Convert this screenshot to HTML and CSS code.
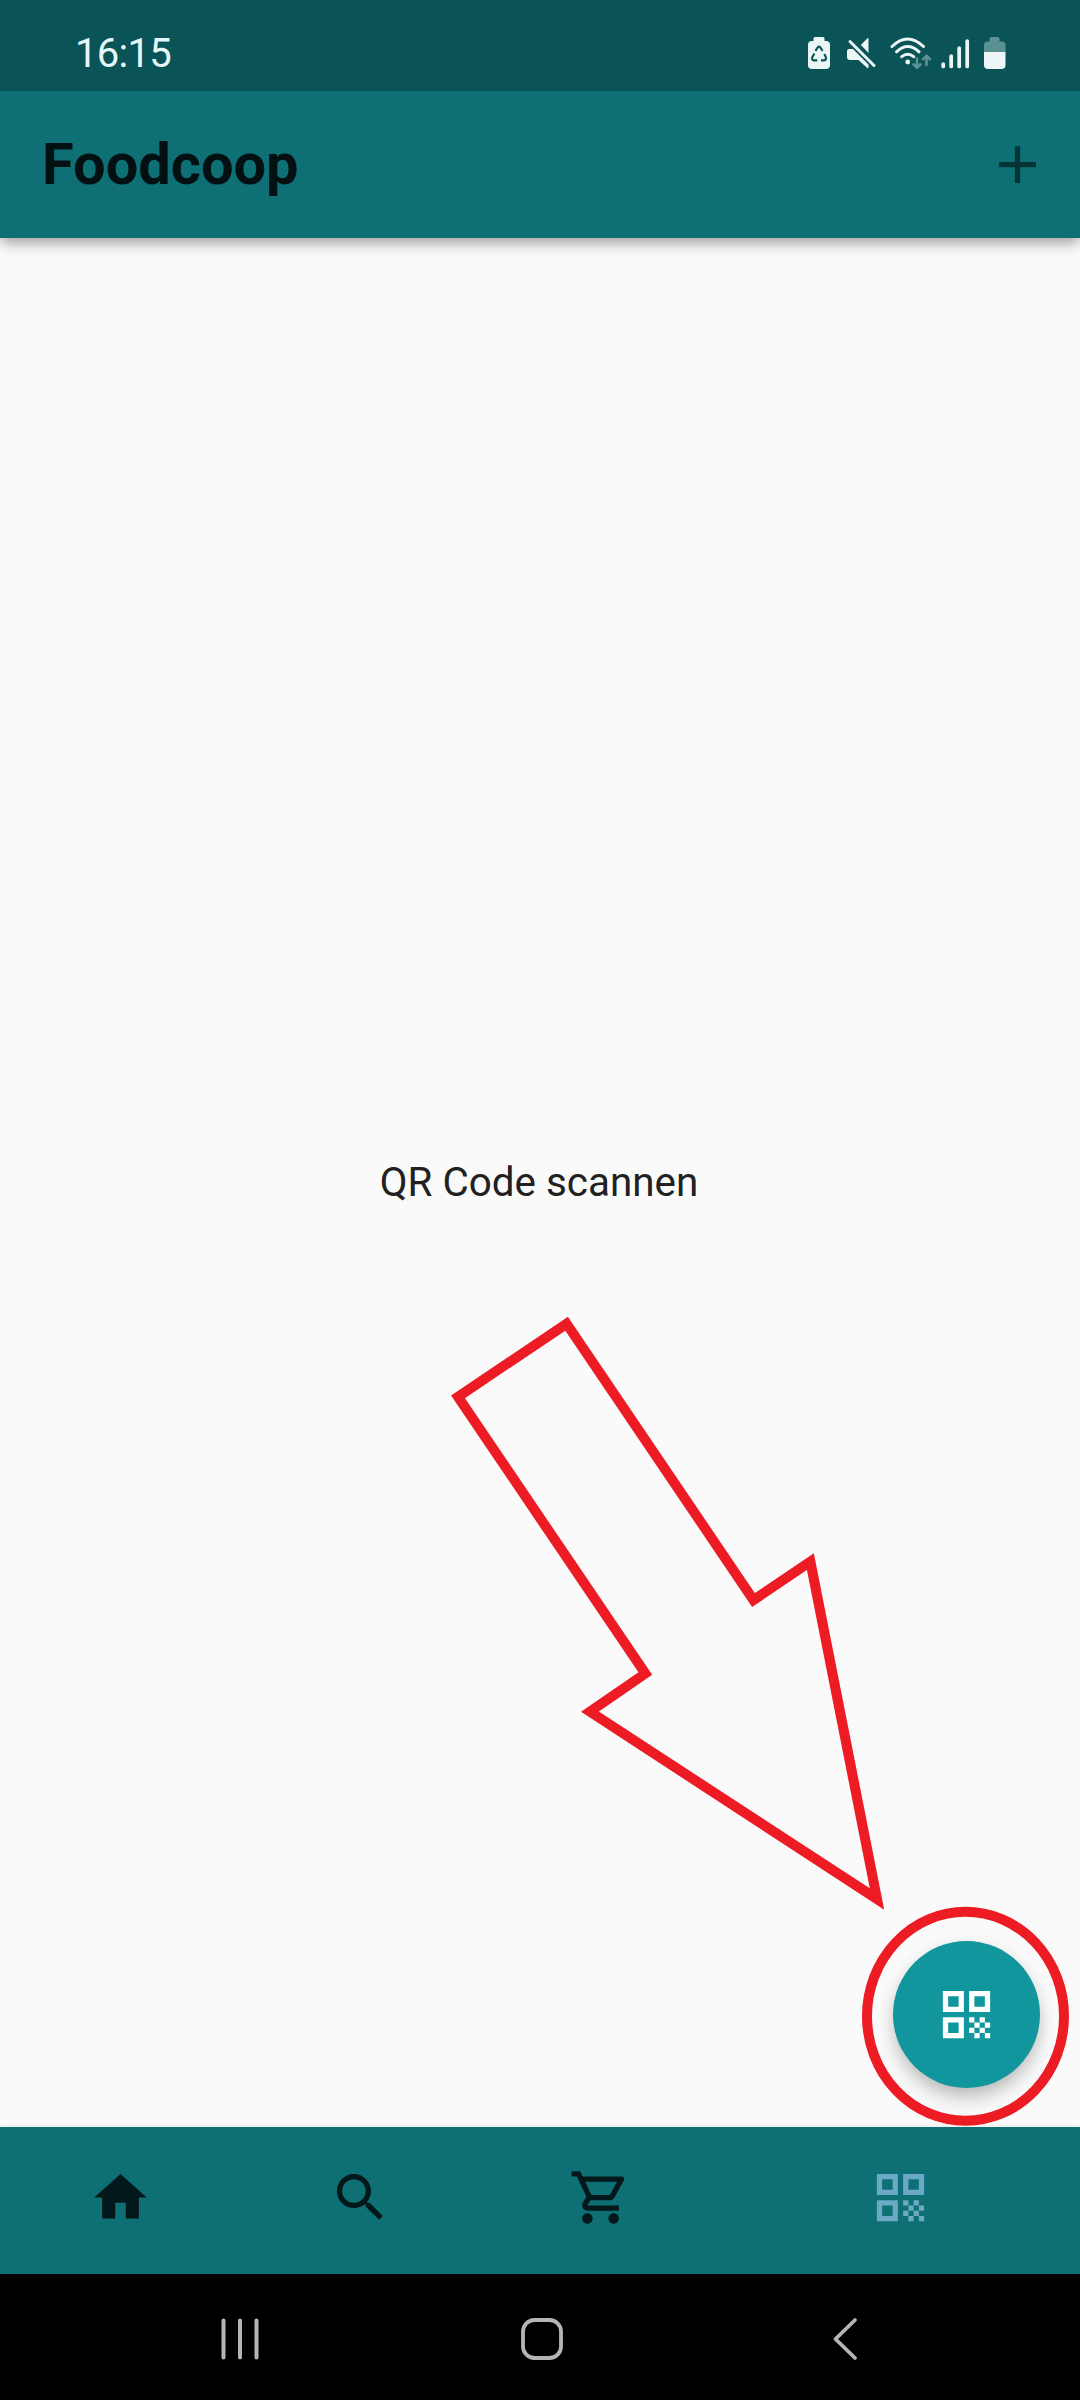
FILE: index.html
```html
<!DOCTYPE html>
<html lang="de">
<head>
<meta charset="utf-8">
<title>Foodcoop</title>
<link rel="stylesheet" href="styles.css">
</head>
<body>
<svg width="0" height="0" class="defs">
  <symbol id="qr" viewBox="0 0 24 24">
    <path d="M3 11h8V3H3v8zm2-6h4v4H5V5zM3 21h8v-8H3v8zm2-6h4v4H5v-4zM13 3v8h8V3h-8zm6 6h-4V5h4v4zM19 19h2v2h-2zM13 13h2v2h-2zM15 15h2v2h-2zM13 17h2v2h-2zM15 19h2v2h-2zM17 17h2v2h-2zM17 13h2v2h-2zM19 15h2v2h-2z"/>
  </symbol>
</svg>
<div class="screen">
  <header class="status">
    <span class="time">16:15</span>
    <div class="status-icons">
      <svg class="st-saver" width="22" height="33" viewBox="0 0 22 33">
        <path fill="#edf6f6" d="M7 0h8q1.500 0 1.500 1.500V4H18q4 0 4 4v20q0 4-4 4H4q-4 0-4-4V8q0-4 4-4h1.500V1.500Q5.500 0 7 0z"/>
        <g fill="none" stroke="#0a5458" stroke-width="2.100" stroke-linejoin="round">
          <path d="M7.400 13.800l2.500-3.600q1.100-1.300 2.200 0l2.500 3.600"/>
          <path d="M16.300 17l1.500 3q.8 2.600-1.500 3.400H13"/>
          <path d="M9.300 23.400H5.700q-2.300-.8-1.500-3l2.200-4"/>
        </g>
      </svg>
      <svg class="st-mute" width="30" height="33" viewBox="0 0 30 33">
        <path fill="#edf6f6" d="M21.500 1.500v16L13 8.800l7-7q1.500-1.200 1.500-.3zM2 12h4l15.500 15.500v2.700q0 1.500-1.500.6L11.500 23H3q-3 0-3-3v-6q0-2 2-2z"/>
        <path d="M5 1l24.500 25.500" stroke="#0a5458" stroke-width="3"/>
        <path d="M3 4.500L27 28.500" stroke="#edf6f6" stroke-width="3" stroke-linecap="round"/>
      </svg>
      <svg class="st-wifi" width="42" height="33" viewBox="0 0 42 33">
        <g fill="none" stroke="#edf6f6" stroke-width="3" stroke-linecap="round">
          <path d="M2 9.500Q17.500-5.500 33.500 9.500"/>
          <path d="M6.500 14.800q11.300-10.500 22.500 0"/>
          <path d="M11.700 19.700q6-5 12 0"/>
        </g>
        <circle cx="17.700" cy="25" r="2.400" fill="#edf6f6"/>
        <g fill="none" stroke="#5a9294" stroke-width="2.600" stroke-linecap="round" stroke-linejoin="round">
          <path d="M27 21.500v9m-3.500-3.200l3.500 3.400 3.500-3.400"/>
          <path d="M36.500 28v-9m-3.500 3.200l3.500-3.400 3.500 3.400"/>
        </g>
      </svg>
      <svg class="st-signal" width="29" height="33" viewBox="0 0 29 33">
        <path d="M2.200 27v2.500M10.200 19v10.500M18.200 11v18.500M26.200 4v25.500" stroke="#edf6f6" stroke-width="3.700" stroke-linecap="round"/>
      </svg>
      <svg class="st-battery" width="22" height="33" viewBox="0 0 22 33">
        <path fill="#5a9294" d="M7.500 0h6q2 0 2 2v2.500H18q3.500 0 3.500 3.500v8H0V8q0-3.500 3.500-3.500h2V2q0-2 2-2z"/>
        <path fill="#edf6f6" d="M0 15h21.500v13q0 4-4 4H4q-4 0-4-4z"/>
      </svg>
    </div>
  </header>
  <div class="appbar">
    <h1 class="title">Foodcoop</h1>
    <svg class="icon add" viewBox="0 0 24 24"><path d="M19 13h-6v6h-2v-6H5v-2h6V5h2v6h6z"/></svg>
  </div>
  <main class="content">
    <p class="message">QR Code scannen</p>
    <button class="fab" aria-label="QR Code scannen"><svg class="icon"><use href="#qr"/></svg></button>
  </main>
  <nav class="tabs">
    <svg class="icon" viewBox="0 0 24 24"><path d="M10 20v-6h4v6h5v-8h3L12 3 2 12h3v8z"/></svg>
    <svg class="icon" viewBox="0 0 24 24"><path d="M15.500 14h-.79l-.28-.27C15.410 12.590 16 11.110 16 9.500 16 5.910 13.090 3 9.500 3S3 5.910 3 9.500 5.910 16 9.500 16c1.610 0 3.090-.59 4.230-1.570l.27.28v.79l5 4.990L20.490 19l-4.990-5zm-6 0C7.010 14 5 11.990 5 9.500S7.010 5 9.500 5 14 7.010 14 9.500 11.990 14 9.500 14z"/></svg>
    <svg class="icon" viewBox="0 0 24 24"><path d="M15.550 13c.75 0 1.410-.41 1.750-1.030l3.580-6.490c.37-.66-.11-1.480-.87-1.480H5.210l-.94-2H1v2h2l3.600 7.590-1.350 2.440C4.520 15.370 5.480 17 7 17h12v-2H7l1.100-2h7.450zM6.160 6h12.150l-2.760 5H8.530L6.160 6zM7 18c-1.100 0-1.990.9-1.990 2S5.900 22 7 22s2-.9 2-2-.9-2-2-2zm10 0c-1.100 0-1.990.9-1.990 2s.89 2 1.990 2 2-.9 2-2-.9-2-2-2z"/></svg>
    <svg class="icon active"><use href="#qr"/></svg>
  </nav>
  <footer class="sysnav">
    <svg width="44" height="46" viewBox="0 0 44 46"><path d="M5.500 4.500v37M22 4.500v37M38.500 4.500v37" stroke-width="4"/></svg>
    <svg width="44" height="46" viewBox="0 0 44 46"><rect x="2" y="4" width="38" height="38" rx="11.500" stroke-width="3.800"/></svg>
    <svg width="44" height="46" viewBox="0 0 44 46"><path d="M32 4L12.500 23 32 42" stroke-width="3.800"/></svg>
  </footer>
  <svg class="annotation" viewBox="0 0 1080 2400">
    <path d="M566.600 1323.800L753.500 1600l56.900-38.300L877 1899 590 1711.700l55.300-38.200L458 1396.800z"/>
    <ellipse cx="965.500" cy="2016.300" rx="98.500" ry="104.500"/>
  </svg>
</div>
</body>
</html>
```
FILE: styles.css
```css
* { box-sizing: border-box; }
body { margin: 0; font-family: Roboto, sans-serif; }
.defs { position: absolute; }
.screen {
  position: relative;
  width: 1080px;
  height: 2400px;
  display: grid;
  grid-template-rows: 91px 147px 1fr 147px 126px;
  background: #fafafa;
  overflow: hidden;
}
.status {
  display: flex;
  align-items: center;
  justify-content: space-between;
  padding: 16px 74px 0 75px;
  background: #0a5458;
}
.time { font-size: 40px; line-height: 48px; letter-spacing: -.7px; color: #e6f7fa; }
.status-icons { display: flex; }
.status-icons svg { display: block; }
.st-mute { margin-left: 17px; }
.st-wifi { margin-left: 13px; }
.st-signal { margin-left: 9px; }
.st-battery { margin-left: 14px; }
.icon { width: 63px; height: 63px; display: block; fill: #03181b; }
.appbar {
  display: flex;
  align-items: center;
  justify-content: space-between;
  padding: 0 31.500px 0 42px;
  background: #0e7074;
  box-shadow: 0 6px 13px -1px rgba(0, 0, 0, .36);
  z-index: 1;
}
.title { margin: 0; padding-bottom: 2px; font-size: 57.750px; line-height: 68px; font-weight: 700; color: #021012; }
.add { fill: #053438; }
.content {
  position: relative;
  display: flex;
  align-items: center;
  justify-content: center;
  padding-right: 2px;
}
.message { margin: 0; font-size: 40.400px; line-height: 48px; color: #212121; }
.fab {
  position: absolute;
  right: 40px;
  bottom: 39.500px;
  width: 147px;
  height: 147px;
  display: grid;
  place-items: center;
  padding: 0;
  border: 0;
  border-radius: 50%;
  background: #10969c;
  box-shadow: 0 12px 20px -3px rgba(0, 0, 0, .24), 0 2px 16px rgba(0, 0, 0, .07);
}
.fab .icon { fill: #fff; }
.tabs {
  display: grid;
  grid-template-columns: 2fr 2fr 2fr 3fr;
  align-items: center;
  justify-items: center;
  padding-bottom: 6px;
  background: #0e7074;
  box-shadow: 0 0 6px rgba(0, 0, 0, .08);
}
.tabs .active { fill: #6ba9c6; }
.sysnav {
  display: flex;
  align-items: center;
  justify-content: space-between;
  padding: 4px 213px 0 218px;
  background: #000;
}
.sysnav svg { fill: none; stroke: #b5b5b5; stroke-linecap: round; stroke-linejoin: round; }
.annotation {
  position: absolute;
  inset: 0;
  width: 1080px;
  height: 2400px;
  fill: none;
  stroke: #ed1c24;
  stroke-width: 10;
  pointer-events: none;
  z-index: 2;
}
```
